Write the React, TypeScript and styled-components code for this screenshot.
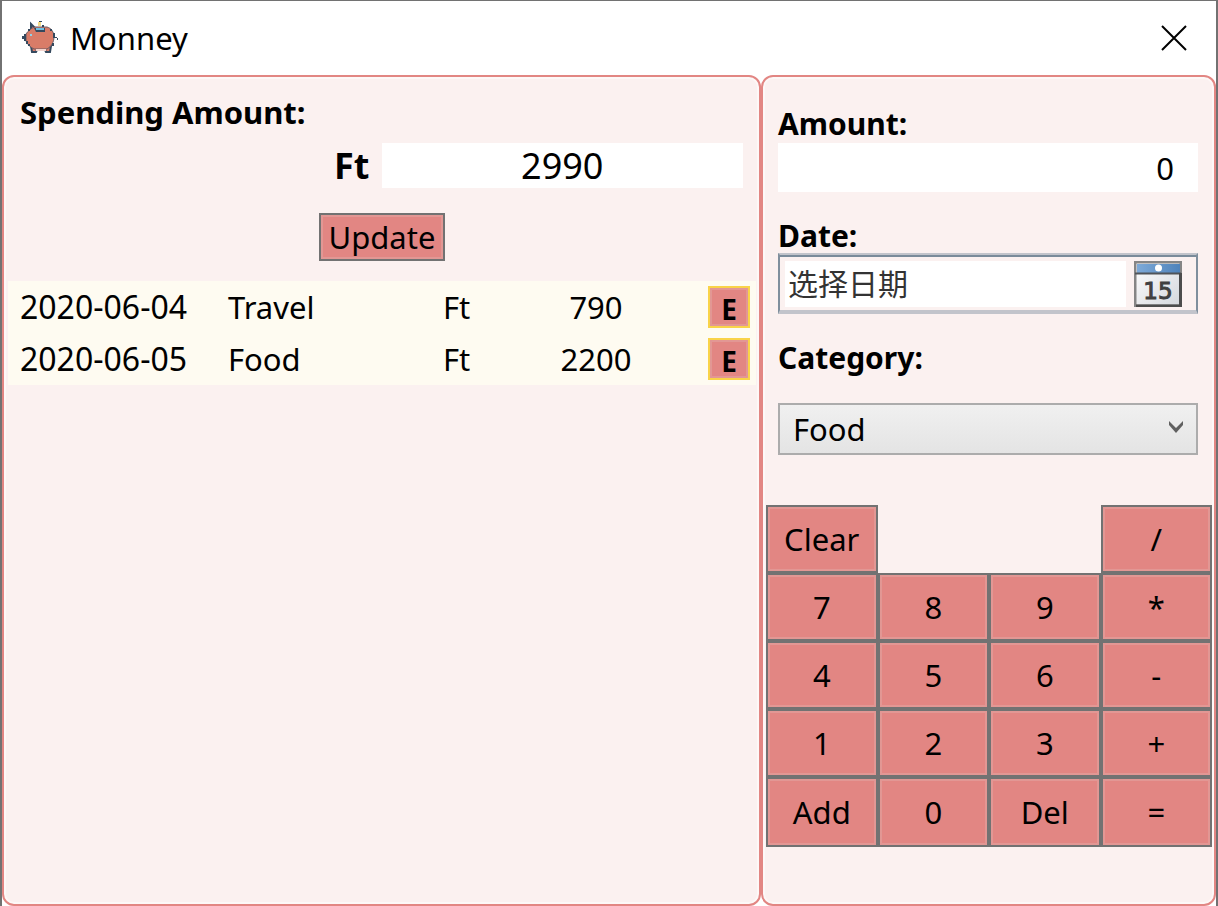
import React, { useState } from 'react';
import styled, { createGlobalStyle } from 'styled-components';

const GlobalStyle = createGlobalStyle`
  * { box-sizing: border-box; }
  body {
    margin: 0;
    background: #fff;
    color: #000;
    font-family: 'Noto Sans', 'Noto Sans CJK SC', sans-serif;
    font-size: 31px;
    line-height: 40px;
  }
  button, input, select { font: inherit; color: inherit; border-radius: 0; margin: 0; }
`;

const Window = styled.main`
  display: flex;
  flex-direction: column;
  min-height: 100vh;
  border: 2px solid #727272;
  border-top-width: 1px;
  border-bottom: 0;
`;

const TitleBar = styled.header`
  display: flex;
  align-items: center;
  height: 74px;
  padding: 0 25px 0 20px;
`;

const Title = styled.h1`
  flex: 1;
  margin: 0 0 0 10px;
  font-size: 31px;
  font-weight: 400;
`;

const CloseButton = styled.button`
  display: flex;
  padding: 4px;
  border: 0;
  background: none;
`;

const Panels = styled.div`
  display: grid;
  grid-template-columns: 759fr 455fr;
  flex: 1;
`;

const Panel = styled.section`
  display: flex;
  flex-direction: column;
  min-width: 0;
  border: 2px solid #e28683;
  border-radius: 12px;
  background: #fbf1f0;
  box-shadow: inset 0 0 0 2px #fdf8f7;
`;

const SpendingPanel = styled(Panel)`
  padding: 15px 3px 0 4px;
`;

const EntryPanel = styled(Panel)`
  padding: 28px 2px 0 3px;
`;

const Label = styled.label`
  display: block;
  font-size: 30px;
  font-weight: 700;
  line-height: 38px;
`;

const PanelHeading = styled.h2`
  margin: 0 0 0 12px;
  font-size: 31px;
  font-weight: 700;
`;

const TotalRow = styled.div`
  display: grid;
  grid-template-columns: 1fr 1fr;
  align-items: center;
  margin: 11px 13px 25px 12px;
`;

const Currency = styled.label`
  padding-right: 12px;
  font-size: 36px;
  font-weight: 700;
  text-align: right;
`;

const TotalInput = styled.input`
  width: 100%;
  height: 45px;
  padding: 0;
  border: 0;
  background: #fff;
  font-size: 36px;
  text-align: center;
`;

const PushButton = styled.button`
  padding: 0;
  border: 2px solid #727272;
  background: #e28683;
  box-shadow: inset 0 0 0 2px #e29794;
`;

const UpdateButton = styled(PushButton)`
  align-self: center;
  width: 126px;
  height: 48px;
`;

const Records = styled.table`
  width: 100%;
  margin-top: 20px;
  border-collapse: collapse;
  table-layout: fixed;
  background: #fefbf1;
`;

const Cell = styled.td<{ $width?: string; $align?: string; $size?: string }>`
  width: ${(p) => p.$width ?? 'auto'};
  height: 52px;
  padding: 0 0 0 ${(p) => (p.$align ? '0' : '12px')};
  font-size: ${(p) => p.$size ?? '31px'};
  text-align: ${(p) => p.$align ?? 'left'};
  white-space: nowrap;
`;

const EditButton = styled(PushButton)`
  display: block;
  width: 42px;
  height: 42px;
  margin-left: auto;
  margin-right: 6px;
  padding-top: 4px;
  border-color: #f9d348;
  font-size: 28px;
  font-weight: 700;
  line-height: 34px;
`;

const Form = styled.form`
  display: flex;
  flex-direction: column;
  padding: 0 14px 0 12px;
`;

const AmountInput = styled.input`
  width: 100%;
  height: 49px;
  margin-bottom: 25px;
  padding: 0 24px 0 10px;
  border: 0;
  background: #fff;
  text-align: right;
`;

const DatePicker = styled.div`
  display: flex;
  align-items: center;
  height: 61px;
  margin: -2px 0 25px;
  padding: 2px 14px 0 5px;
  border: 2px solid #7f8f9d;
  border-top-color: #c2c4cb;
  border-bottom: 4px solid #c2c4cb;
  box-shadow: inset 0 2px #7a8b9a;
`;

const DateInput = styled.input`
  flex: 1;
  min-width: 0;
  height: 46px;
  margin-right: 8px;
  padding: 0 3px 4px;
  border: 0;
  background: #fff;
  font-family: 'Noto Sans CJK SC', sans-serif;
  font-size: 30px;
  &::placeholder { color: #333; opacity: 1; }
`;

const CalendarButton = styled.button`
  display: flex;
  padding: 0;
  border: 0;
  background: none;
`;

const SelectWrap = styled.div`
  position: relative;
  margin: 26px 0 50px;
  svg {
    position: absolute;
    top: 17px;
    right: 14px;
    pointer-events: none;
  }
`;

const CategorySelect = styled.select`
  display: block;
  width: 100%;
  height: 52px;
  padding: 0 40px 0 13px;
  border: 2px solid #acacac;
  background: linear-gradient(#f0f0f0, #e4e4e4);
  appearance: none;
`;

const Keypad = styled.div`
  display: grid;
  grid-template-columns: repeat(4, 1fr);
  grid-template-rows: repeat(4, 68px) 70px;
`;

const Key = styled(PushButton)<{ $column?: number }>`
  grid-column: ${(p) => p.$column ?? 'auto'};
`;

const PigIcon = () => (
  <svg width="38" height="34" viewBox="0 0 38 34" aria-hidden="true">
    <g fill="#d97c68" stroke="#34495e" strokeWidth="2">
      <path d="M9 25l1 6h4l2-4zM29 25l-1 6h-4l-2-4z" />
      <path d="M9 8V3l5 5z" />
    </g>
    <path
      d="M13 6h12c4 1 7 5 7 10s-3 10-7 12H12c-4-2-6-4-8-8V13c2-3 5-6 9-7z"
      fill="#d97c68"
      stroke="#6b5a62"
      strokeWidth="1"
    />
    <path d="M0 15h2v-2h2v7H2v-2H0z" fill="#34495e" />
    <path d="M6 8h2v2H6zM28 8h2v2h-2zM4 20h2v3H4zM6 23h2v2H6zM30 22h2v3h-2zM31 12h2v5h-2z" fill="#34495e" />
    <path d="M12 7h11v4H14z" fill="#34495e" />
    <path d="M14 7h8v2h-8z" fill="#6ec1e4" />
    <path d="M8 13h2v2H8z" fill="#8fd3ea" />
    <path d="M16 1h3v4h-3z" fill="#f4dc8a" />
    <path d="M17 0h3v1h-3zM20 4h2v2h-2z" fill="#34495e" />
    <path d="M33 16h2v1h-2zM35 17h1v2h-1z" fill="#34495e" />
    <path d="M14 28h10v2H14z" fill="#f3d5cf" />
  </svg>
);

const CalendarIcon = () => (
  <svg width="48" height="46" viewBox="0 0 48 46" aria-hidden="true">
    <defs>
      <linearGradient id="page" x1="0" y1="0" x2="1" y2="1">
        <stop offset="0" stopColor="#fff" /><stop offset="1" stopColor="#d4d7dc" />
      </linearGradient>
      <linearGradient id="band" x1="0" y1="0" x2="1" y2="0">
        <stop offset="0" stopColor="#7eaad8" /><stop offset="1" stopColor="#4f83bb" />
      </linearGradient>
    </defs>
    <rect x="1" y="1" width="46" height="44" fill="url(#page)" stroke="#858585" strokeWidth="3" />
    <rect x="3" y="3" width="43" height="9" fill="url(#band)" />
    <path d="M1 12.500h46" stroke="#505459" strokeWidth="2" />
    <path d="M46.500 12v33H2" fill="none" stroke="#4c4c4c" strokeWidth="3" />
    <circle cx="24.500" cy="7" r="3.500" fill="#fff" />
    <text x="24" y="38" textAnchor="middle" fontFamily="DejaVu Sans" fontSize="23" fill="#404040" stroke="#404040" strokeWidth="1">15</text>
  </svg>
);

const records = [
  { date: '2020-06-04', category: 'Travel', amount: 790 },
  { date: '2020-06-05', category: 'Food', amount: 2200 },
];

const keys = ['Clear', '/', '7', '8', '9', '*', '4', '5', '6', '-', '1', '2', '3', '+', 'Add', '0', 'Del', '='];

export default function App() {
  const [total, setTotal] = useState('2990');
  const [amount, setAmount] = useState('0');
  const [date, setDate] = useState('');

  return (
    <Window>
      <GlobalStyle />
      <TitleBar>
        <PigIcon />
        <Title>Monney</Title>
        <CloseButton type="button" aria-label="Close">
          <svg width="26" height="26" viewBox="0 0 26 26" aria-hidden="true">
            <path d="M1 1l24 24M25 1L1 25" stroke="#000" strokeWidth="2" />
          </svg>
        </CloseButton>
      </TitleBar>
      <Panels>
        <SpendingPanel>
          <PanelHeading>Spending Amount:</PanelHeading>
          <TotalRow>
            <Currency htmlFor="total">Ft</Currency>
            <TotalInput id="total" value={total} onChange={(e) => setTotal(e.target.value)} />
          </TotalRow>
          <UpdateButton type="button">Update</UpdateButton>
          <Records>
            <tbody>
              {records.map((r) => (
                <tr key={r.date}>
                  <Cell $width="208px" $size="32px">{r.date}</Cell>
                  <Cell $width="215px">{r.category}</Cell>
                  <Cell $width="86px">Ft</Cell>
                  <Cell $width="158px" $align="center">{r.amount}</Cell>
                  <Cell><EditButton type="button">E</EditButton></Cell>
                </tr>
              ))}
            </tbody>
          </Records>
        </SpendingPanel>
        <EntryPanel>
          <Form>
            <Label htmlFor="amount">Amount:</Label>
            <AmountInput id="amount" value={amount} onChange={(e) => setAmount(e.target.value)} />
            <Label htmlFor="date">Date:</Label>
            <DatePicker>
              <DateInput id="date" placeholder="选择日期" value={date} onChange={(e) => setDate(e.target.value)} />
              <CalendarButton type="button" aria-label="Open calendar"><CalendarIcon /></CalendarButton>
            </DatePicker>
            <Label htmlFor="category">Category:</Label>
            <SelectWrap>
              <CategorySelect id="category" defaultValue="Food">
                <option>Food</option>
                <option>Travel</option>
              </CategorySelect>
              <svg width="16" height="14" viewBox="0 0 16 14" aria-hidden="true">
                <path d="M1 1v4l7 8 7-8V1L8 8z" fill="#606060" />
              </svg>
            </SelectWrap>
          </Form>
          <Keypad>
            {keys.map((k) => (
              <Key key={k} type="button" $column={k === '/' ? 4 : undefined}>{k}</Key>
            ))}
          </Keypad>
        </EntryPanel>
      </Panels>
    </Window>
  );
}
